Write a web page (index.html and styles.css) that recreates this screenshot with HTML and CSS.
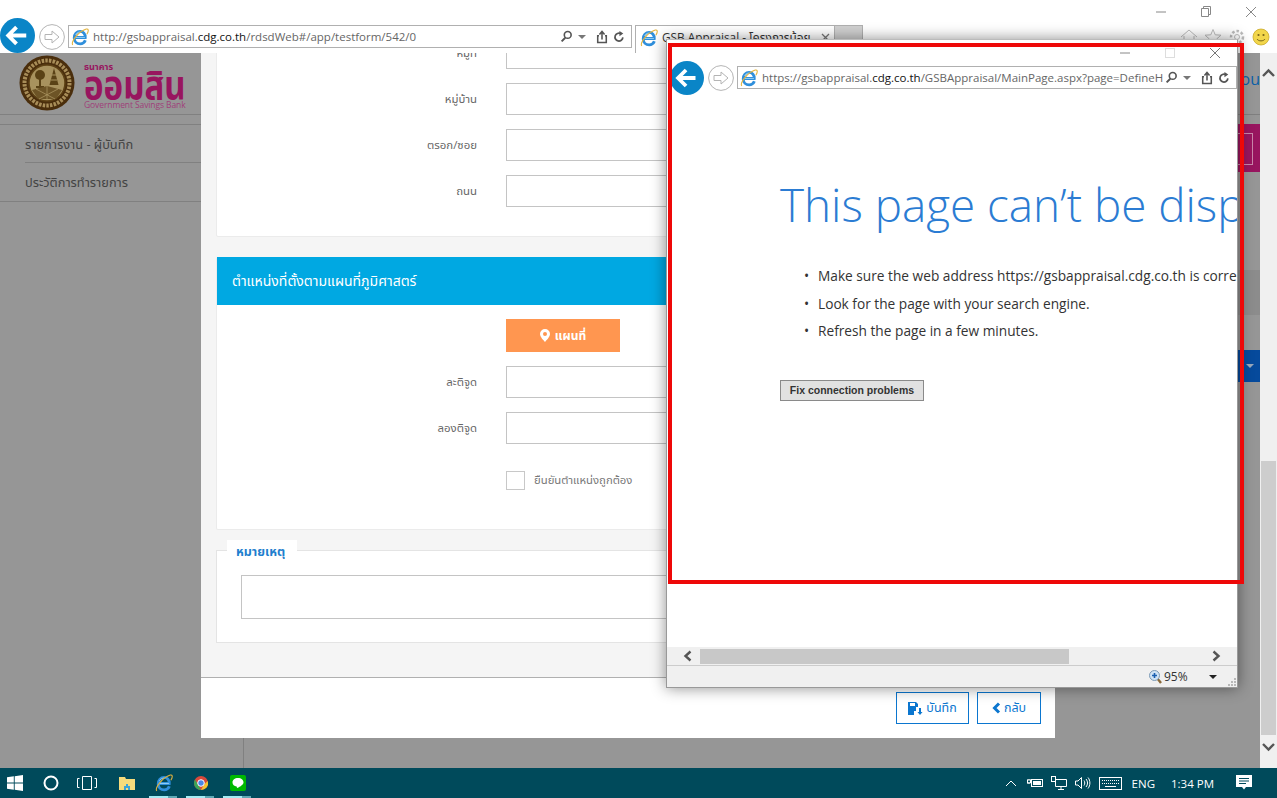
FILE: index.html
```html
<!DOCTYPE html>
<html lang="th">
<head>
<meta charset="utf-8">
<title>GSB Appraisal</title>
<link rel="stylesheet" href="styles.css">
</head>
<body>
<svg class="defs" width="0" height="0">
  <symbol id="ie" viewBox="0 0 20 20">
    <path d="M5 10.5H15.8C16.2 6.600 13.400 3.800 10.200 3.800C6.400 3.800 3.600 7 3.600 11C3.600 15 6.600 17.600 10.200 17.600C12.900 17.600 14.900 16.200 16 13.600" fill="none" stroke="#2f8fdc" stroke-width="3.200"/>
    <path d="M5 10.500H15.500M5 7.500C6 5.500 8 4.500 10.200 4.500" fill="none" stroke="#9ed6f6" stroke-width="1"/>
    <path d="M2 18.8C-.5 15.5 8 4 17 1.2C20 .6 19.6 4 17.6 7" fill="none" stroke="#e3b33c" stroke-width="1.200"/>
  </symbol>
  <symbol id="back" viewBox="0 0 36 36">
    <circle cx="18" cy="18" r="18" fill="#0a85c7"/>
    <path d="M27 18H9M17 9.5L8.5 18L17 26.5" fill="none" stroke="#fff" stroke-width="4"/>
  </symbol>
  <symbol id="forward" viewBox="0 0 26 26">
    <circle cx="13" cy="13" r="12.4" fill="#fff" stroke="#b4b4b4"/>
    <path d="M6 10.5H13V7L20 13L13 19V15.5H6Z" fill="none" stroke="#b4b4b4"/>
  </symbol>
  <symbol id="search" viewBox="0 0 16 16">
    <circle cx="9.5" cy="6" r="4.2" fill="none" stroke="#555" stroke-width="2"/>
    <path d="M6.5 9.5L2 14" stroke="#555" stroke-width="2.4"/>
  </symbol>
  <symbol id="share" viewBox="0 0 14 16">
    <path d="M3.5 6.5H2V14.5H12V6.5H10.5" fill="none" stroke="#555" stroke-width="1.8"/>
    <path d="M7 11V2.5M4 5L7 1.5L10 5" fill="none" stroke="#555" stroke-width="1.8"/>
  </symbol>
  <symbol id="refresh" viewBox="0 0 14 14">
    <path d="M11.5 7.5A4.6 4.6 0 1 1 9 3" fill="none" stroke="#555" stroke-width="2"/>
    <path d="M7.5 0V6L12 3Z" fill="#555"/>
  </symbol>
</svg>

<div class="desktop">
  <header class="chrome">
    <div class="winbar">
      <svg class="wb" width="12" height="12" viewBox="0 0 12 12"><path d="M1 6H11" stroke="#888"/></svg>
      <svg class="wb" width="12" height="12" viewBox="0 0 12 12"><path d="M3.500 2.500V.5H10.500V8.500H8.500M1.500 2.500H8.500V10.500H1.500Z" fill="none" stroke="#888"/></svg>
      <svg class="wb" width="12" height="12" viewBox="0 0 12 12"><path d="M1 1L11 11M11 1L1 11" stroke="#888"/></svg>
    </div>
    <div class="navbar">
      <svg class="backbtn" width="35" height="35"><use href="#back"/></svg>
      <svg class="fwdbtn" width="26" height="26"><use href="#forward"/></svg>
      <div class="addr">
        <svg class="addr-ie" width="18" height="18"><use href="#ie"/></svg>
        <span class="url">http://gsbappraisal.<b>cdg.co.th</b>/rdsdWeb#/app/testform/542/0</span>
        <svg width="13" height="15"><use href="#search"/></svg>
        <i class="caret"></i>
        <svg class="tool" width="12" height="14"><use href="#share"/></svg>
        <svg width="12" height="12"><use href="#refresh"/></svg>
      </div>
      <div class="tab">
        <svg width="18" height="18"><use href="#ie"/></svg>
        <span class="tab-title">GSB Appraisal - โครงการน้อย</span>
        <svg width="9" height="9" viewBox="0 0 9 9"><path d="M1 1L8 8M8 1L1 8" stroke="#777" stroke-width="1.300"/></svg>
      </div>
      <div class="newtab"></div>
      <div class="tools">
        <svg width="18" height="18" viewBox="0 0 18 18"><path d="M1 9L9 2L17 9M4 8V16H14V8" fill="none" stroke="#bbb"/></svg>
        <svg width="18" height="18" viewBox="0 0 18 18"><path d="M9 1.500L11.200 6.800L17 7.200L12.600 11L14 16.500L9 13.500L4 16.500L5.400 11L1 7.200L6.800 6.800Z" fill="none" stroke="#bbb"/></svg>
        <svg width="18" height="18" viewBox="0 0 18 18"><circle cx="9" cy="9" r="2.500" fill="none" stroke="#bbb"/><circle cx="9" cy="9" r="6" fill="none" stroke="#bbb" stroke-width="2.500" stroke-dasharray="2.500 2"/></svg>
        <svg width="18" height="18" viewBox="0 0 18 18"><circle cx="9" cy="9" r="8" fill="#f2d64b" stroke="#c9a92a" stroke-width=".8"/><circle cx="6.500" cy="7" r="1.100" fill="#77641a"/><circle cx="11.500" cy="7" r="1.100" fill="#77641a"/><path d="M5 11C6.500 13.500 11.500 13.500 13 11" fill="none" stroke="#77641a"/></svg>
      </div>
    </div>
  </header>

  <main class="viewport">
    <aside class="sidebar">
      <div class="logo">
        <svg width="56" height="56" viewBox="0 0 56 56" class="emblem">
          <circle cx="28" cy="28" r="27.500" fill="#4a2e0c"/>
          <circle cx="28" cy="28" r="22.500" fill="none" stroke="#a88d58" stroke-width="4" stroke-dasharray="2.500 1.200"/>
          <circle cx="28" cy="28" r="18" fill="#a8925e" stroke="#5d4115" stroke-width="1.500"/>
          <path d="M35 13L39.500 30H30.500Z" fill="#5a4216"/>
          <path d="M33 20H37M32 25H38" stroke="#a8925e"/>
          <circle cx="21" cy="20" r="5" fill="#5a4216"/>
          <path d="M21 22V32M17 32H25" stroke="#5a4216" stroke-width="2"/>
          <path d="M13 35L28 31L43 35L37 44H19Z" fill="#6d5426"/>
          <path d="M17 34L36 44M39 34L20 44M28 31V45" stroke="#a8925e" stroke-width=".8"/>
        </svg>
        <div class="brand">
          <div class="brand-top">ธนาคาร</div>
          <div class="brand-name">ออมสิน</div>
          <div class="brand-en">Government Savings Bank</div>
        </div>
      </div>
      <nav class="sidenav">
        <a class="sidenav-item">รายการงาน - ผู้บันทึก</a>
        <a class="sidenav-item">ประวัติการทำรายการ</a>
      </nav>
    </aside>
    <div class="rule-col"></div>
    <div class="behind">
      <div class="behind-top">ou</div>
      <div class="behind-pink"><span></span></div>
      <div class="behind-grey"></div>
      <div class="behind-blue"><i></i></div>
    </div>
    <div class="vscroll">
      <svg width="17" height="12" viewBox="0 0 17 12"><path d="M3 9L8.500 3.500L14 9" fill="none" stroke="#555" stroke-width="2.400"/></svg>
      <div class="vthumb"></div>
      <svg width="17" height="12" viewBox="0 0 17 12"><path d="M3 3L8.500 8.500L14 3" fill="none" stroke="#555" stroke-width="2.400"/></svg>
    </div>

    <section class="modal">
      <div class="modal-body">
        <div class="panel panel-address">
          <div class="row"><label>หมู่ที่</label><div class="input"></div></div>
          <div class="row"><label>หมู่บ้าน</label><div class="input"></div></div>
          <div class="row"><label>ตรอก/ซอย</label><div class="input"></div></div>
          <div class="row"><label>ถนน</label><div class="input"></div></div>
        </div>
        <div class="panel panel-map">
          <h2 class="panel-head">ตำแหน่งที่ตั้งตามแผนที่ภูมิศาสตร์</h2>
          <div class="row row-btn">
            <label></label>
            <button class="mapbtn">
              <svg width="10" height="13" viewBox="0 0 10 13"><path fill-rule="evenodd" d="M5 0A5 5 0 0 1 10 5C10 8 6.500 11 5 13C3.500 11 0 8 0 5A5 5 0 0 1 5 0ZM5 3A2 2 0 1 0 5 7A2 2 0 1 0 5 3Z" fill="#fff"/></svg>
              แผนที่
            </button>
          </div>
          <div class="row"><label>ละติจูด</label><div class="input"></div></div>
          <div class="row"><label>ลองติจูด</label><div class="input"></div></div>
          <div class="row row-check"><label></label><span class="check"></span><span class="check-text">ยืนยันตำแหน่งถูกต้อง</span></div>
        </div>
        <div class="remark">
          <div class="remark-legend">หมายเหตุ</div>
          <div class="textarea"></div>
        </div>
      </div>
      <footer class="modal-foot">
        <button class="outline btn-save">
          <svg width="15" height="13" viewBox="0 0 15 13"><path d="M0 0H8L10 2V5H8V9H6V13H0ZM2 1V4H7V1Z M11 6H13V10H14.500L12 13L9.500 10H11Z" fill="#0b76cf" fill-rule="evenodd"/></svg>
          บันทึก
        </button>
        <button class="outline btn-back">
          <svg width="9" height="12" viewBox="0 0 9 12"><path d="M7 1.500L2.500 6L7 10.500" fill="none" stroke="#0b76cf" stroke-width="3"/></svg>
          กลับ
        </button>
      </footer>
    </section>
  </main>

  <section class="popup">
    <div class="popup-title">
      <svg width="12" height="12" viewBox="0 0 12 12"><path d="M1 6H11" stroke="#888"/></svg>
      <svg width="12" height="12" viewBox="0 0 12 12"><rect x="1.500" y="1.500" width="9" height="9" fill="none" stroke="#ddd"/></svg>
      <svg width="12" height="12" viewBox="0 0 12 12"><path d="M1 1L11 11M11 1L1 11" stroke="#777"/></svg>
    </div>
    <div class="popup-nav">
      <svg class="p-back" width="34" height="34"><use href="#back"/></svg>
      <svg class="p-fwd" width="26" height="26"><use href="#forward"/></svg>
      <div class="addr p-addr">
        <svg class="addr-ie" width="18" height="18"><use href="#ie"/></svg>
        <span class="url">https://gsbappraisal.<b>cdg.co.th</b>/GSBAppraisal/MainPage.aspx?page=DefineH</span>
        <svg width="13" height="15"><use href="#search"/></svg>
        <i class="caret"></i>
        <svg class="tool" width="12" height="14"><use href="#share"/></svg>
        <svg width="12" height="12"><use href="#refresh"/></svg>
      </div>
    </div>
    <div class="popup-page">
      <h1 class="err-title">This page can’t be displayed</h1>
      <ul class="err-list">
        <li>Make sure the web address https://gsbappraisal.cdg.co.th is correct.</li>
        <li>Look for the page with your search engine.</li>
        <li>Refresh the page in a few minutes.</li>
      </ul>
      <button class="fix">Fix connection problems</button>
    </div>
    <div class="hscroll">
      <svg width="12" height="12" viewBox="0 0 12 12"><path d="M8.500 1.500L3.500 6L8.500 10.500" fill="none" stroke="#555" stroke-width="2.400"/></svg>
      <div class="htrack"><div class="hthumb"></div></div>
      <svg width="12" height="12" viewBox="0 0 12 12"><path d="M3.500 1.500L8.500 6L3.500 10.500" fill="none" stroke="#555" stroke-width="2.400"/></svg>
    </div>
    <div class="status">
      <svg width="13" height="14" viewBox="0 0 13 14"><path d="M8 8L12 13" stroke="#8a6a3a" stroke-width="2.400"/><circle cx="5.500" cy="5.500" r="5" fill="#cfe3f5" stroke="#7d9ab5"/><path d="M5.500 3V8M3 5.500H8" stroke="#1a5fb0" stroke-width="1.600"/></svg>
      <span class="zoomval">95%</span>
      <i class="caret caret-dark"></i>
      <svg class="grip" width="9" height="9" viewBox="0 0 9 9"><path d="M7 1h2v2h-2zM4 4h2v2h-2zM7 4h2v2h-2zM1 7h2v2h-2zM4 7h2v2h-2zM7 7h2v2h-2z" fill="#b8b8b8"/></svg>
    </div>
  </section>
  <div class="redbox"></div>

  <footer class="taskbar">
    <div class="task-left">
      <svg class="t-win" width="16" height="16" viewBox="0 0 16 16"><path d="M0 2.300L6.800 1.300V7.500H0ZM7.700 1.200L16 0V7.500H7.700ZM0 8.400H6.800V14.700L0 13.700ZM7.700 8.400H16V16L7.700 14.800Z" fill="#fff"/></svg>
      <svg class="t-ring" width="16" height="16" viewBox="0 0 16 16"><circle cx="8" cy="8" r="6.500" fill="none" stroke="#fff" stroke-width="2"/></svg>
      <svg class="t-view" width="20" height="14" viewBox="0 0 20 14"><path d="M5.500 .500H14.500V13.500H5.500ZM2.500 2.500H.5V11.500H2.500M17.500 2.500H19.500V11.500H17.500" fill="none" stroke="#fff"/></svg>
      <div class="t-app">
        <svg width="16" height="14" viewBox="0 0 16 14"><path d="M0 1H6L7 3H16V14H0Z" fill="#f7dc7c"/><path d="M5 14V10H7V8H9V10H11V14H9V12H7V14Z" fill="#3da4d8"/></svg>
      </div>
      <div class="t-app"><svg width="18" height="18"><use href="#ie"/></svg></div>
      <div class="t-app">
        <svg width="14" height="14" viewBox="0 0 14 14"><circle cx="7" cy="7" r="7" fill="#d8483b"/><path d="M7 14A7 7 0 0 1 1 3.500L4.500 9.500Z" fill="#3aa757"/><path d="M7 14L10 8.500L13.800 5A7 7 0 0 1 7 14Z" fill="#f3c22f"/><circle cx="7" cy="7" r="3.300" fill="#4a87e8" stroke="#fff"/></svg>
      </div>
      <div class="t-app">
        <svg width="16" height="16" viewBox="0 0 16 16"><rect width="16" height="16" rx="2" fill="#00b900"/><path d="M8 3C4.700 3 2.500 5 2.500 7.400C2.500 9.500 4.200 11.100 6.600 11.500C7 11.600 6.700 12.900 7.200 12.900C8 12.700 13.500 10 13.500 7.400C13.500 5 11.300 3 8 3Z" fill="#fff"/></svg>
      </div>
    </div>
    <div class="task-right">
      <svg width="12" height="8" viewBox="0 0 12 8"><path d="M1 7L6 2L11 7" fill="none" stroke="#fff"/></svg>
      <svg class="t-batt" width="16" height="12" viewBox="0 0 16 12"><path d="M0 6H3M1 3V2M3 3V2M.5 3H3.500V6H.5Z" stroke="#fff" fill="none"/><rect x="4.500" y="2.500" width="11" height="7" fill="none" stroke="#fff"/><rect x="6" y="4" width="8" height="4" fill="#fff"/></svg>
      <svg class="t-net" width="16" height="14" viewBox="0 0 16 14"><path d="M4.500 3.500H15.500V10.500H4.500ZM10 10.500V13M7 13.500H13" fill="none" stroke="#fff"/><rect x=".5" y=".5" width="4" height="5" fill="#004a5b" stroke="#fff"/></svg>
      <svg class="t-net" width="16" height="14" viewBox="0 0 16 14"><path d="M.5 5H3L6.500 1.500V12.500L3 9H.5ZM9 4.500C10 6 10 8 9 9.500M11 3C13 5.500 13 8.500 11 11M13 1.500C15.500 4.500 15.500 9.500 13 12.500" fill="none" stroke="#fff"/></svg>
      <svg class="t-net" width="23" height="13" viewBox="0 0 23 13"><rect x=".5" y=".5" width="22" height="12" fill="none" stroke="#fff"/><path d="M3 3.500H20M3 6.500H20" stroke="#fff" stroke-dasharray="1 1"/><path d="M6 9.500H17" stroke="#fff"/></svg>
      <span class="t-lang">ENG</span>
      <span class="t-time">1:34 PM</span>
      <svg class="t-note" width="16" height="16" viewBox="0 0 16 16"><path d="M0 0H16V12H10L8 14.500L6 12H0Z" fill="#fff"/><path d="M3 3.500H13M3 6H13M3 8.500H10" stroke="#004a5b"/></svg>
    </div>
  </footer>
</div>
</body>
</html>
```
FILE: styles.css
```css
* { box-sizing: border-box; }
html, body { margin: 0; padding: 0; background: #fff; }
body { font-family: "Open Sans", "Noto Sans", "Noto Sans Thai", "Liberation Sans", sans-serif; }
.defs { position: absolute; }
button { font-family: inherit; }
label { font: inherit; }

.desktop { width: 1277px; height: 798px; overflow: hidden; display: flex; flex-direction: column; position: relative; }

/* IE chrome */
.chrome { height: 53px; flex: none; background: #fff; position: relative; }
.winbar { height: 18px; padding: 6px 0 0 1155px; display: flex; gap: 33px; }
.wb { flex: none; }
.navbar { height: 35px; display: flex; align-items: flex-start; }
.backbtn { flex: none; margin-top: 0; }
.fwdbtn { flex: none; margin: 6px 0 0 4px; }
.addr { width: 564px; height: 23px; margin: 7px 0 0 3px; border: 1px solid #b0b0b0; background: #fff; display: flex; align-items: center; padding: 0 6px 0 2px; flex: none; }
.addr-ie { flex: none; margin-right: 3px; }
.url { flex: 1; font-size: 11.500px; color: #666; white-space: nowrap; overflow: hidden; padding-left: 1px; }
.url b { font-weight: 400; color: #111; }
.caret { width: 0; height: 0; border: 4px solid transparent; border-top-color: #777; border-bottom: 0; margin: 0 10px 0 5px; flex: none; }
.tool { margin-right: 5px; flex: none; }
.tab { width: 200px; height: 28px; margin: 7px 0 0 3px; border: 1px solid #b0b0b0; border-bottom: 0; display: flex; align-items: center; padding: 0 4px 4px 4px; gap: 4px; flex: none; overflow: hidden; }
.tab svg { flex: none; }
.tab-title { flex: 1; font-size: 11.800px; color: #333; white-space: nowrap; overflow: hidden; }
.newtab { width: 28px; height: 28px; margin-top: 7px; background: #d0d0d0; border: 1px solid #b0b0b0; border-left: 0; flex: none; }
.tools { margin-left: 317px; margin-top: 10px; display: flex; gap: 6px; flex: none; }

/* page behind the overlay */
.viewport { flex: 1; position: relative; display: flex; background: #969696; overflow: hidden; }
.sidebar { width: 201px; flex: none; }
.logo { height: 62px; padding: 2px 0 0 19px; display: flex; gap: 9px; border-bottom: 1px solid #808080; overflow: hidden; }
.emblem { flex: none; }
.brand { color: #98155f; line-height: 1; padding-top: 7px; }
.brand-top { font-size: 9px; font-weight: 700; height: 9px; }
.brand-name { font-size: 33px; font-weight: 700; height: 30px; line-height: 30px; margin-top: -1px; transform: scaleY(1.180); }
.brand-en { font-size: 8.500px; color: #a0407a; white-space: nowrap; letter-spacing: -.1px; margin-top: 1px; }
.sidenav { margin-top: 9px; border-top: 1px solid #808080; }
.sidenav-item { display: block; height: 38px; line-height: 38px; margin-left: 25px; font-size: 12.800px; color: #444; border-bottom: 1px solid #808080; }
.sidenav-item:last-child { margin-left: 0; padding-left: 25px; height: 39px; }
.rule-col { width: 43px; flex: none; border-right: 1px solid #808080; }
.behind { flex: 1; }
.behind-top { height: 62px; border-bottom: 1px solid #7f7f7f; padding: 16px 0 0 0; text-align: right; font-size: 16px; color: #0b5fa8; line-height: 20px; margin-bottom: 9px; }
.behind-pink { height: 48px; background: #98155f; padding: 9px 7px 0 0; display: flex; justify-content: flex-end; }
.behind-pink span { width: 60px; height: 32px; border: 1px solid #c987ab; }
.behind-grey { height: 45px; margin-top: 98px; background: #8c8c8c; }
.behind-blue { height: 32px; margin-top: 35px; background: #064a9c; display: flex; justify-content: flex-end; align-items: center; padding-right: 6px; }
.behind-blue i { width: 0; height: 0; border: 4px solid transparent; border-top-color: #9aa8bb; border-bottom: 0; }
.vscroll { width: 17px; flex: none; background: #f0f0f0; display: flex; flex-direction: column; }
.vscroll svg { flex: none; margin: 14px 0 0; }
.vthumb { height: 274px; margin: auto 1px 0; background: #cdcdcd; }
.vscroll svg:last-child { margin: 6px 0 15px; }

/* modal */
.modal { position: absolute; left: 201px; top: 0; width: 854px; height: 685px; background: #f5f5f5; display: flex; flex-direction: column; overflow: hidden; }
.modal-body { flex: 1; padding: 0 15px; overflow: hidden; }
.panel { background: #fff; border: 1px solid #ebebeb; margin-bottom: 20px; border-radius: 2px; }
.panel-address { height: 208px; margin-top: -24px; }
.panel-map { height: 273px; border-top: 0; }
.row { display: flex; align-items: center; height: 46px; font-size: 11.400px; color: #666; }
.row label { width: 260px; text-align: right; flex: none; margin-right: 29px; }
.input { flex: 1; height: 32px; background: #fff; border: 1px solid #c4c4c4; }
.panel-head { margin: 0; height: 48px; line-height: 48px; padding-left: 15px; background: #00a8e2; color: #fff; font-size: 14px; font-weight: 400; }
.row-btn { height: 33px; margin: 14px 0 7px; }
.mapbtn { width: 114px; height: 33px; background: #ff9650; color: #fff; border: 0; font-size: 12px; font-weight: 700; display: flex; align-items: center; justify-content: center; gap: 5px; }
.row-check { height: 19px; margin-top: 20px; }
.check { width: 19px; height: 19px; border: 1px solid #c8c8c8; flex: none; margin-right: 9px; }
.check-text { color: #777; font-size: 11.300px; }
.remark { height: 93px; position: relative; background: #fff; border: 1px solid #e4e4e4; padding: 24px 24px 0; }
.remark-legend { position: absolute; left: 10px; top: -11px; height: 28px; width: 70px; padding: 3px 0 0 9px; background: #fff; font-size: 12.500px; font-weight: 700; color: #1f7fce; line-height: 18px; }
.textarea { height: 44px; border: 1px solid #c4c4c4; background: #fff; margin-right: -1px; }
.modal-foot { height: 61px; flex: none; background: #fff; border-top: 1px solid #b0b0b0; display: flex; justify-content: flex-end; gap: 8px; padding: 14px 14px 0 0; }
.outline { height: 32px; background: #fff; border: 1px solid #0b76cf; color: #0b76cf; font-size: 12.500px; display: flex; align-items: center; justify-content: center; gap: 3px; padding: 0; }
.btn-save { width: 73px; }
.btn-back { width: 64px; }

/* popup */
.popup { position: absolute; left: 666px; top: 39px; width: 572px; height: 649px; background: #fff; border: 1px solid #999; border-top-color: #bbb; box-shadow: 0 0 14px rgba(0,0,0,.45); display: flex; flex-direction: column; }
.popup-title { height: 21px; flex: none; padding: 7px 0 0 452px; display: flex; gap: 33px; }
.popup-nav { height: 34px; flex: none; display: flex; align-items: flex-start; padding-left: 3px; }
.p-back { flex: none; }
.p-fwd { flex: none; margin: 4px 0 0 4px; }
.p-addr { width: 500px; margin: 5px 0 0 3px; }
.popup-page { flex: 1; padding: 79px 0 0 113px; overflow: hidden; white-space: nowrap; }
.err-title { margin: 0; font-size: 45.800px; line-height: 60px; font-weight: 300; color: #2b7cd3; }
.err-list { margin: 28px 0 0; padding: 0 0 0 38px; font-size: 13.700px; line-height: 27.500px; color: #333; font-weight: 400; list-style: none; }
.err-list li { position: relative; }
.err-list li::before { content: "•"; position: absolute; left: -14px; }
.fix { display: block; margin-top: 35px; width: 144px; height: 21px; padding: 0; background: #e1e1e1; border: 1px solid #8a8a8a; font-family: "Liberation Sans", sans-serif; font-size: 10.500px; font-weight: 700; color: #333; }
.hscroll { height: 18px; flex: none; background: #f0f0f0; display: flex; align-items: center; padding: 0 15px; }
.htrack { flex: 1; height: 15px; padding-left: 6px; }
.hthumb { width: 369px; height: 15px; background: #c8c8c8; }
.status { height: 22px; flex: none; background: #f0f0f0; border-top: 1px solid #ccc; display: flex; align-items: center; padding-left: 482px; gap: 2px; position: relative; }
.zoomval { font-size: 12px; color: #333; }
.caret-dark { border-top-color: #222; margin: 0 0 0 19px; }
.grip { position: absolute; right: 1px; bottom: 1px; }

.redbox { position: absolute; left: 668px; top: 43px; width: 576px; height: 541px; border: 4px solid #ee0808; pointer-events: none; }

/* taskbar */
.taskbar { height: 30px; flex: none; background: #004a5b; display: flex; justify-content: space-between; align-items: center; }
.task-left { display: flex; align-items: center; height: 30px; }
.t-win { margin-left: 7px; }
.t-ring { margin-left: 20px; }
.t-view { margin-left: 18px; margin-right: 11px; }
.t-app { width: 37px; height: 30px; display: flex; align-items: center; justify-content: center; position: relative; }
.t-app:nth-child(n+5)::after { content: ""; position: absolute; left: 4px; right: 5px; bottom: 0; height: 2px; background: linear-gradient(90deg, #a4ecf4 68%, #5fa8b4 68%); }
.task-right { display: flex; align-items: center; height: 30px; color: #fff; font-size: 12px; padding-right: 25px; }
.t-batt { margin-left: 10px; }
.t-net { margin-left: 8px; }
.t-lang { margin-left: 10px; font-size: 11.500px; }
.t-time { margin-left: 16px; font-size: 11.500px; }
.t-note { margin-left: 22px; }
```
